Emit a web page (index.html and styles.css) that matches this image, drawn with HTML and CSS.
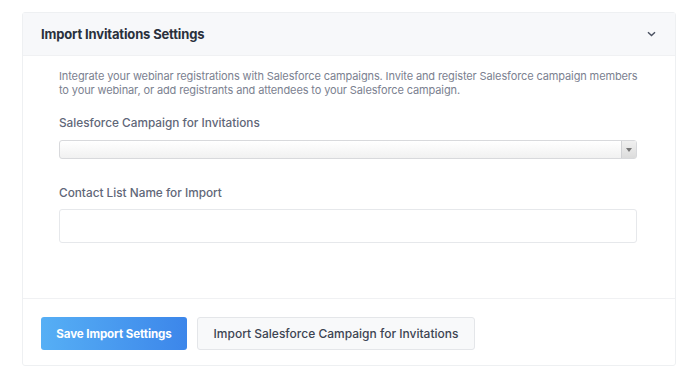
FILE: index.html
```html
<!DOCTYPE html>
<html lang="en">
  <head>
    <meta charset="UTF-8" />
    <meta name="viewport" content="width=device-width, initial-scale=1.0" />
    <title>Import Invitations Settings</title>
    <link rel="stylesheet" href="styles.css">
  </head>
  <body>
    <div class="panel">
      <div class="panel-header">
        <h2>Import Invitations Settings</h2>
        <svg class="chevron" width="9" height="6" viewBox="0 0 9 6">
          <path d="M1 1.2 L4.5 4.6 L8 1.2" fill="none" stroke="#4a5160" stroke-width="1.4" />
        </svg>
      </div>
      <div class="panel-body">
        <p class="intro">
          Integrate your webinar registrations with Salesforce campaigns. Invite and register Salesforce campaign members<br>
          to your webinar, or add registrants and attendees to your Salesforce campaign.
        </p>
        <div class="form-group">
          <label for="campaign">Salesforce Campaign for Invitations</label>
          <div class="select" id="campaign">
            <span class="select-value"></span>
            <span class="select-arrow"></span>
          </div>
        </div>
        <div class="form-group">
          <label for="listName">Contact List Name for Import</label>
          <input type="text" id="listName" name="listName" />
        </div>
      </div>
      <div class="panel-footer">
        <button class="primary">Save Import Settings</button>
        <button class="secondary">Import Salesforce Campaign for Invitations</button>
      </div>
    </div>
  </body>
</html>
```

FILE: styles.css
```css
body {
  font-family: Inter, "Noto Sans", sans-serif;
  background-color: #fff;
  margin: 0;
  padding: 12px 0 0 22px;
}
.panel {
  width: 652px;
  border: 1px solid #eef0f2;
  border-radius: 3px;
  background-color: #fff;
}
.panel-header {
  height: 42px;
  background-color: #f7f8fa;
  border-bottom: 1px solid #f0f1f3;
  display: flex;
  align-items: center;
  justify-content: space-between;
  padding: 0 19px 0 18px;
}
.panel-header h2 {
  margin: 0;
  font-size: 13px;
  font-weight: 700;
  color: #2a303c;
  letter-spacing: -0.15px;
}
.panel-body {
  padding: 13px 38px 55px 36px;
}
.intro {
  margin: 0;
  font-size: 11px;
  line-height: 14px;
  letter-spacing: -0.12px;
  white-space: nowrap;
  color: #7b8190;
}
.form-group {
  margin-top: 18px;
}
.form-group + .form-group {
  margin-top: 26px;
}
label {
  display: block;
  font-size: 11.8px;
  line-height: 16px;
  font-weight: 500;
  color: #5f6778;
  margin-bottom: 9px;
}
.select {
  height: 17px;
  border: 1px solid #d8d9dc;
  border-radius: 3px;
  background: linear-gradient(#ffffff, #f1f1f1);
  display: flex;
  justify-content: flex-end;
}
.select-arrow {
  width: 14px;
  border-left: 1px solid #d0d1d4;
  background: linear-gradient(#f0f0f0, #dcdcdc);
  position: relative;
}
.select-arrow::after {
  content: "";
  position: absolute;
  left: 4px;
  top: 7px;
  border-left: 3px solid transparent;
  border-right: 3px solid transparent;
  border-top: 4px solid #777;
}
input[type="text"] {
  display: block;
  box-sizing: border-box;
  width: 100%;
  height: 34px;
  border: 1px solid #e6e8eb;
  border-radius: 3px;
  margin-top: -1px;
}
.panel-footer {
  border-top: 1px solid #f0f1f3;
  padding: 18px 18px 15px;
  display: flex;
  gap: 10px;
}
button {
  font-family: inherit;
  height: 33px;
  border-radius: 3px;
  font-size: 12px;
  cursor: pointer;
}
button.primary {
  width: 146px;
  border: none;
  color: #fff;
  font-weight: 700;
  font-size: 11.6px;
  letter-spacing: -0.1px;
  background: linear-gradient(90deg, #56aff5, #3c86ea);
}
button.secondary {
  width: 278px;
  border: 1px solid #e4e6e9;
  background-color: #f8f9fa;
  color: #3d4452;
  font-weight: 500;
}
```
